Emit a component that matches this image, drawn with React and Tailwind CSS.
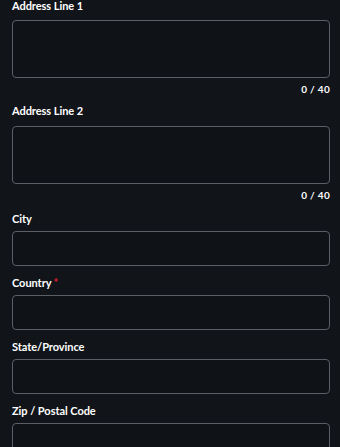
const font = { fontFamily: 'Lato, "Liberation Sans", sans-serif' }

// ── Field pieces ──────────────────────────────────────────────────────────────
const Label = ({ children, required, className = '' }) => (
  <label className={`block text-[11px] font-bold text-white tracking-[-0.05px] ${className}`}>
    {children}
    {required && <span className="text-[#e11d2e] ml-0.5">*</span>}
  </label>
)

const TextAreaField = ({ label, first }) => (
  <div className={first ? '' : 'mt-2'}>
    <Label className={first ? 'leading-[12px] mb-2' : 'leading-[14px] mb-2'}>{label}</Label>
    <textarea
      className="block w-full h-[58px] resize-none rounded-[4px] border border-[#5a5f66] bg-[#0f1318] px-3 py-2 text-[13px] text-white outline-none"
    />
    <div className="mt-1 text-right text-[10px] leading-[14px] font-bold text-white tracking-[0.3px]">
      0 / 40
    </div>
  </div>
)

const InputField = ({ label, required }) => (
  <div className="mt-[10px]">
    <Label required={required} className="leading-[14px] mb-[5px]">{label}</Label>
    <input
      type="text"
      className="block w-full h-[35px] rounded-[4px] border border-[#5a5f66] bg-[#0f1318] px-3 text-[13px] text-white outline-none"
    />
  </div>
)

// ── Main App ──────────────────────────────────────────────────────────────────
export default function App() {
  return (
    <div className="min-h-screen h-[447px] overflow-hidden bg-[#11151a] px-3" style={font}>
      <div className="w-[318px]">
        <TextAreaField label="Address Line 1" first />
        <TextAreaField label="Address Line 2" />
        <InputField label="City" />
        <InputField label="Country" required />
        <InputField label="State/Province" />
        <InputField label="Zip / Postal Code" />
      </div>
    </div>
  )
}
